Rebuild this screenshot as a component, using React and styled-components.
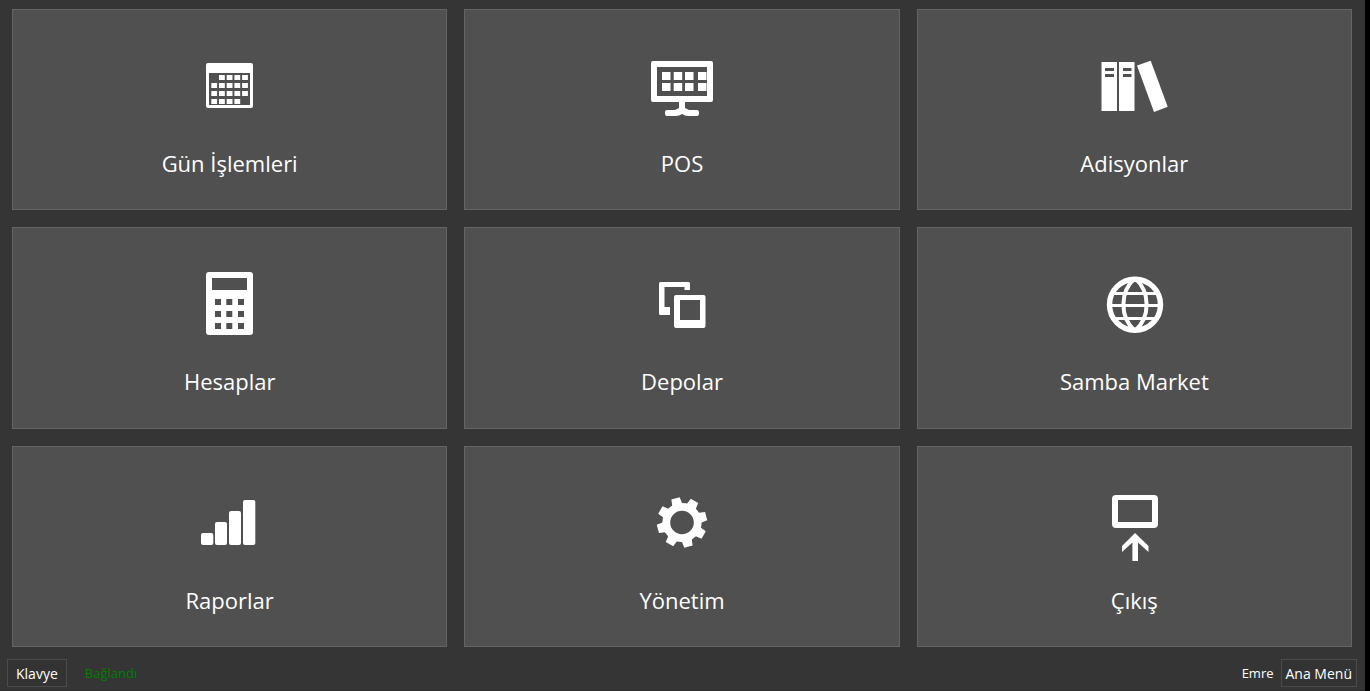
import React from "react";
import styled, { createGlobalStyle, ThemeProvider } from "styled-components";


const theme = {
  colors: {
    page: "#353535",
    tile: "#505050",
    tileBorder: "#646464",
    button: "#333333",
    buttonBorder: "#4b4b4b",
    white: "#ffffff",
    green: "#008000",
    black: "#000000",
  },
};


const CalendarIcon = () => {
  const cells = [];
  for (let row = 0; row < 4; row++) {
    for (let col = 0; col < 5; col++) {
      // first and last day of the month are empty
      if ((row === 0 && col === 0) || (row === 3 && col === 4)) continue;
      cells.push(
        <rect key={`${row}-${col}`} x={17.3 + col * 7.7} y={21 + row * 8} width="5.8" height="5" />
      );
    }
  }
  return (
    <Icon>
      <path
        fillRule="evenodd"
        d="M14 9H57Q59 9 59 11V52Q59 54 57 54H14Q12 54 12 52V11Q12 9 14 9ZM15 19V51H56V19Z"
      />
      {cells}
    </Icon>
  );
};

const PosIcon = () => (
  <Icon>
    <path
      fillRule="evenodd"
      d="M7 7H65Q67 7 67 9V46Q67 48 65 48H7Q5 48 5 46V9Q5 7 7 7ZM11 13V42H61V13Z"
    />
    {[18, 29].map((y) =>
      [16, 27.7, 39, 52].map((x) => <rect key={`${x}-${y}`} x={x} y={y} width="8.5" height="8" />)
    )}
    <path d="M33 48h6v6l4 2h8q2 0 2 2v2q0 2-2 2h-9q-3 0-6-2-3 2-6 2h-9q-2 0-2-2v-2q0-2 2-2h8l4-2z" />
  </Icon>
);

const BooksIcon = () => (
  <Icon>
    <path
      fillRule="evenodd"
      d="M3.500 8H19V57H3.500ZM7 14V17H16V14ZM7 20V23H16V20Z"
    />
    <path
      fillRule="evenodd"
      d="M21 8H36.5V57H21ZM25 14V17H33.5V14ZM25 20V23H33.5V20Z"
    />
    <path d="M39 11.5L52.7 6.7L69.7 52.7L56 58Z" />
  </Icon>
);

const CalculatorIcon = () => (
  <Icon>
    <path
      fillRule="evenodd"
      d="M15 0H56Q59 0 59 3V60Q59 63 56 63H15Q12 63 12 60V3Q12 0 15 0Z
        M18 6V18H53V6Z
        M21 27v6h6v-6Z M32.3 27v6h6v-6Z M44 27v6h6v-6Z
        M21 39v6h6v-6Z M32.3 39v6h6v-6Z M44 39v6h6v-6Z
        M21 51v6h6v-6Z M32.3 51v6h6v-6Z M44 51v6h6v-6Z"
    />
  </Icon>
);

const WindowsIcon = () => (
  <Icon>
    <path d="M14.500 10H42.500Q44 10 44 11.500V18H38.5V15H18.5V35H24V43H14.500Q13 43 13 41.500V11.500Q13 10 14.500 10Z" />
    <path
      fillRule="evenodd"
      d="M30 23H57.500Q59.5 23 59.5 25V54Q59.5 56 57.500 56H30Q28 56 28 54V25Q28 23 30 23ZM34 28V48H54V28Z"
    />
  </Icon>
);

const GlobeIcon = () => (
  <Icon>
    <g fill="none" stroke="currentColor">
      <circle cx="37" cy="32.700" r="25.5" strokeWidth="5.400" />
      <path strokeWidth="4" d="M37 6C21.500 20 21.500 45 37 59M37 6C52.500 20 52.500 45 37 59" />
      <path strokeWidth="3" d="M14 21.500H60M11 33.500H63M14 46.500H60" />
    </g>
  </Icon>
);

const BarsIcon = () => (
  <Icon>
    <rect x="7" y="42" width="12.3" height="12" rx="2" />
    <rect x="21" y="31" width="12" height="23" rx="2" />
    <rect x="35" y="20" width="12" height="34" rx="2" />
    <rect x="49" y="9" width="12.3" height="45" rx="2" />
  </Icon>
);

const GearIcon = () => (
  <Icon>
    <g transform="translate(36 31.5)">
      <circle r="15.700" fill="none" stroke="currentColor" strokeWidth="7.800" />
      {[-15, 30, 75, 120, 165, 210, 255, 300].map((angle) => (
        <path key={angle} transform={`rotate(${angle})`} d="M-4.300 -25H4.300L5.300 -17H-5.300Z" />
      ))}
    </g>
  </Icon>
);

const ExitIcon = () => (
  <Icon>
    <path
      fillRule="evenodd"
      d="M18 4H56Q60 4 60 8V33Q60 37 56 37H18Q14 37 14 33V8Q14 4 18 4ZM20 9V31H54V9Z"
    />
    <path d="M37 42L50.500 55V61L40 51.500V70H34.400V51.500L24 61V55Z" />
  </Icon>
);


const menuItems = [
  { label: "Gün İşlemleri", icon: CalendarIcon },
  { label: "POS", icon: PosIcon },
  { label: "Adisyonlar", icon: BooksIcon },
  { label: "Hesaplar", icon: CalculatorIcon },
  { label: "Depolar", icon: WindowsIcon },
  { label: "Samba Market", icon: GlobeIcon },
  { label: "Raporlar", icon: BarsIcon },
  { label: "Yönetim", icon: GearIcon },
  { label: "Çıkış", icon: ExitIcon },
];


const App = () => {
  return (
    <ThemeProvider theme={theme}>
      <GlobalStyle />
      <PageWrapper>
        <MenuGrid>
          {menuItems.map(({ label, icon: ItemIcon }) => (
            <Tile key={label} type="button">
              <ItemIcon />
              <TileLabel>{label}</TileLabel>
            </Tile>
          ))}
        </MenuGrid>

        <Footer>
          <FooterGroup $gap="18px">
            <FooterButton type="button" $padding="8px">Klavye</FooterButton>
            <FooterText $green>Bağlandı</FooterText>
          </FooterGroup>
          <FooterGroup $gap="7px">
            <FooterText>Emre</FooterText>
            <FooterButton type="button" $padding="4px">Ana Menü</FooterButton>
          </FooterGroup>
        </Footer>
      </PageWrapper>
    </ThemeProvider>
  );
};


const GlobalStyle = createGlobalStyle`
* {
  box-sizing: border-box;
}

body {
  margin: 0;
  background: ${({ theme }) => theme.colors.page};
}

button {
  font-family: inherit;
  cursor: pointer;
}
`

const PageWrapper = styled.div`
display:flex;
flex-direction:column;
min-height:100vh;
background:${({ theme }) => theme.colors.page};
border-right:5px solid ${({ theme }) => theme.colors.black};
color:${({ theme }) => theme.colors.white};
font-family:'Segoe UI', 'Open Sans', 'Noto Sans', sans-serif;
`

const MenuGrid = styled.main`
flex:1;
display:grid;
grid-template-columns:repeat(3, 1fr);
grid-auto-rows:1fr;
gap:17px;
padding:9px 13px 0 12px;
`

const Tile = styled.button`
display:flex;
flex-direction:column;
align-items:center;
justify-content:flex-start;
gap:21px;
padding:44px 8px 28px;
background:${({ theme }) => theme.colors.tile};
border:1px solid ${({ theme }) => theme.colors.tileBorder};
color:${({ theme }) => theme.colors.white};
`

const Icon = styled.svg.attrs({ viewBox: "0 0 72 72", "aria-hidden": true })`
display:block;
flex:none;
width:72px;
height:72px;
fill:currentColor;
`

const TileLabel = styled.span`
font-size:22px;
line-height:32px;
`

const Footer = styled.footer`
display:flex;
justify-content:space-between;
padding:12px 8px 3px 7px;
border-bottom:1px solid #2a2a2a;
`

const FooterGroup = styled.div`
display:flex;
align-items:center;
gap:${({ $gap }) => $gap};
`

const FooterButton = styled.button`
height:28px;
padding:2px ${({ $padding }) => $padding} 0;
background:${({ theme }) => theme.colors.button};
border:1px solid ${({ theme }) => theme.colors.buttonBorder};
color:${({ theme }) => theme.colors.white};
font-size:14px;
line-height:24px;
`

const FooterText = styled.span`
color:${({ theme, $green }) => ($green ? theme.colors.green : theme.colors.white)};
font-size:13px;
line-height:28px;
`


export default App
